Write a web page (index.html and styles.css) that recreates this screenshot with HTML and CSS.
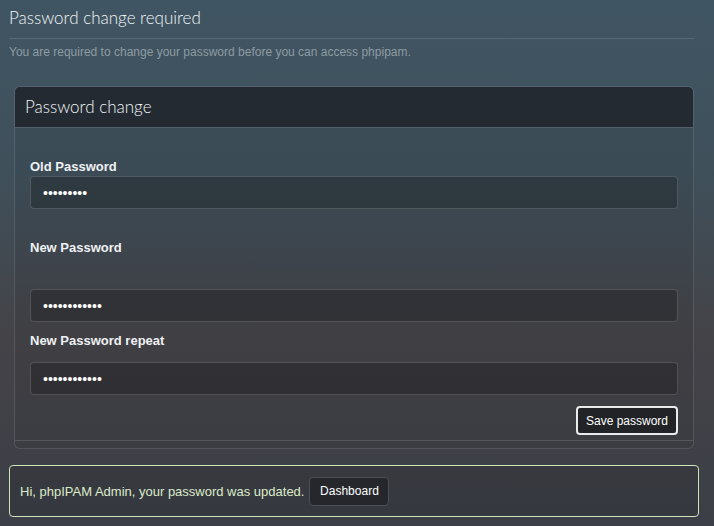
FILE: index.html
```html
<!DOCTYPE html>
<html lang="en">
<head>
<meta charset="utf-8">
<title>Password change required</title>
<link rel="stylesheet" href="styles.css">
</head>
<body>
<div class="page">
  <h1 class="title">Password change required</h1>
  <div class="rule"></div>
  <p class="subtitle">You are required to change your password before you can access phpipam.</p>

  <div class="panel">
    <div class="panel-heading">Password change</div>
    <div class="panel-body">
      <label class="label label-old">Old Password</label>
      <input class="field field-old" type="password" value="123456789">
      <label class="label label-new">New Password</label>
      <input class="field field-new" type="password" value="123456789012">
      <label class="label label-repeat">New Password repeat</label>
      <input class="field field-repeat" type="password" value="123456789012">
      <div class="actions">
        <button class="btn-save" type="button">Save password</button>
      </div>
    </div>
    <div class="panel-footer"></div>
  </div>

  <div class="alert">
    <span class="alert-text">Hi, phpIPAM Admin, your password was updated.</span>
    <button class="btn-dash" type="button">Dashboard</button>
  </div>
</div>
</body>
</html>
```

FILE: styles.css
```css
html, body {
  margin: 0;
  padding: 0;
  height: 100%;
}

body {
  background: linear-gradient(to bottom, #405563 0%, #3f505b 32%, #444348 64%, #3c3f47 100%);
  font-family: "Liberation Sans", Arial, sans-serif;
  color: #fff;
  overflow: hidden;
}

.page {
  display: flex;
  flex-direction: column;
  align-items: flex-start;
}

.title {
  margin: 0 0 0 9px;
  padding-top: 7px;
  font: 300 17px/22px Lato, "Open Sans", sans-serif;
  color: #f1f5f7;
}

.rule {
  margin: 9px 0 0 9px;
  width: 685px;
  height: 1px;
  background: rgba(255, 255, 255, 0.13);
}

.subtitle {
  margin: 6px 0 0 9px;
  font-size: 12px;
  line-height: 14px;
  color: #8e9ba2;
}

.panel {
  margin: 27px 0 0 14px;
  width: 680px;
  box-sizing: border-box;
  border: 1px solid rgba(255, 255, 255, 0.12);
  border-radius: 6px;
  background: rgba(0, 0, 0, 0.06);
  overflow: hidden;
}

.panel-heading {
  height: 41px;
  box-sizing: border-box;
  padding-left: 10px;
  background: #232a31;
  border-bottom: 1px solid #54606a;
  font: 300 17px/40px Lato, "Open Sans", sans-serif;
  color: #f1f5f7;
}

.panel-body {
  display: flex;
  flex-direction: column;
  padding: 31px 15px 5px 15px;
}

.label {
  display: block;
  font-weight: bold;
  font-size: 13px;
  line-height: 16px;
  color: #eef1f3;
}

.label-new { margin-top: 31px; }
.label-repeat { margin-top: 11px; }

.field {
  display: block;
  box-sizing: border-box;
  width: 648px;
  height: 33px;
  margin: 0;
  padding: 0 12px;
  border: 1px solid rgba(255, 255, 255, 0.16);
  border-radius: 4px;
  background: rgba(0, 0, 0, 0.22);
  color: #ffffff;
  font-family: "Liberation Sans", Arial, sans-serif;
  font-size: 14px;
  outline: none;
}

.field-old { margin-top: 1px; }
.field-new { margin-top: 33px; }
.field-repeat { margin-top: 13px; }

.actions {
  display: flex;
  justify-content: flex-end;
  margin-top: 11px;
}

.btn-save {
  height: 29px;
  width: 102px;
  padding: 0;
  box-sizing: border-box;
  border: 2px solid #e9eaec;
  border-radius: 4px;
  background: #212327;
  color: #ffffff;
  font-family: "Liberation Sans", Arial, sans-serif;
  font-size: 12px;
}

.panel-footer {
  height: 7px;
  border-top: 1px solid rgba(255, 255, 255, 0.14);
}

.alert {
  display: flex;
  align-items: center;
  gap: 5px;
  margin: 16px 0 0 9px;
  width: 690px;
  height: 52px;
  box-sizing: border-box;
  padding: 0 10px;
  border: 1px solid #cfe2b8;
  border-radius: 4px;
  background: rgba(0, 0, 0, 0.1);
}

.alert-text {
  font-size: 13px;
  color: #dcebc9;
}

.btn-dash {
  height: 29px;
  width: 80px;
  padding: 0;
  box-sizing: border-box;
  border: 1px solid #4b4f56;
  border-radius: 4px;
  background: #25272c;
  color: #ffffff;
  font-family: "Liberation Sans", Arial, sans-serif;
  font-size: 12px;
}
```
